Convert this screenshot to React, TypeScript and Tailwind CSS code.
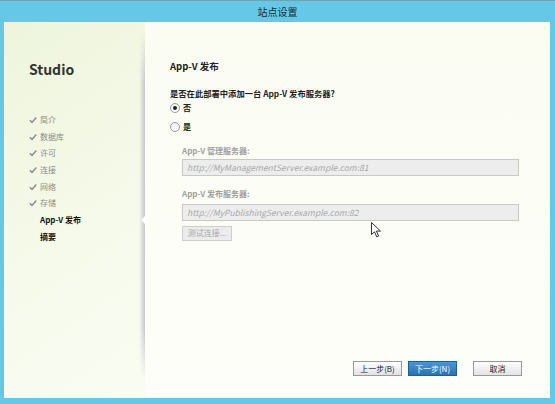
import React from 'react';

const font = { fontFamily: '"Segoe UI", "Noto Sans CJK SC", "Noto Sans", sans-serif' };

const steps = [
  { label: '简介', done: true },
  { label: '数据库', done: true },
  { label: '许可', done: true },
  { label: '连接', done: true },
  { label: '网络', done: true },
  { label: '存储', done: true },
  { label: 'App-V 发布', done: false },
  { label: '摘要', done: false },
];

function Check() {
  return (
    <svg width="8" height="8" viewBox="0 0 8 8" className="shrink-0">
      <path d="M0.8 4.3 L3 6.4 L7.3 1.4" fill="none" stroke="#8a8d8a" strokeWidth="1.5" />
    </svg>
  );
}

function Radio({ checked }: { checked?: boolean }) {
  return (
    <span className="w-[10px] h-[10px] rounded-full border border-[#9a9a9a] bg-gradient-to-b from-[#f0f0f0] to-white flex items-center justify-center">
      {checked && <span className="w-[4px] h-[4px] rounded-full bg-[#222]" />}
    </span>
  );
}

function Cursor() {
  return (
    <svg width="12" height="17" viewBox="0 0 12 17" className="absolute left-[226px] top-[200px]">
      <path d="M0.5 0.5 L0.5 12.5 L3.5 9.8 L5.7 14.8 L7.6 14 L5.4 9.1 L9.5 9.1 Z" fill="white" stroke="#333" strokeWidth="1" />
    </svg>
  );
}

export default function App() {
  return (
    <div className="w-[555px] h-[404px] bg-[#64c8e6] border-t border-[#8a9aa2] flex flex-col overflow-hidden" style={font}>
      <div className="h-[21px] flex items-center justify-center text-[10px] text-[#1c2a30]">站点设置</div>
      <div className="flex-1 flex pl-[4px] pr-[5px] pb-[6px]">
        <div className="flex-1 flex bg-gradient-to-br from-[#eef5dc] via-[#f8fcf0] to-[#fbfdf6]">
          {/* sidebar */}
          <div className="w-[141px] flex">
            <div className="flex-1 pl-[25px] pt-[40px]">
              <div className="text-[14px] font-bold text-[#333] leading-none">Studio</div>
              <div className="mt-[38px] flex flex-col gap-[4.7px]">
                {steps.map((s) => (
                  <div key={s.label} className="h-[12px] flex items-center gap-[3px] text-[8px] leading-none">
                    {s.done ? <Check /> : <span className="w-[8px]" />}
                    <span className={s.done ? 'text-[#8a8d8a]' : 'text-[#111] font-bold'}>{s.label}</span>
                  </div>
                ))}
              </div>
            </div>
            <div className="w-[6px] mt-[10px] mb-[18px] bg-gradient-to-r from-transparent to-[#c4c7cc] [mask-image:linear-gradient(to_bottom,transparent,black_15%,black_85%,transparent)]" />
          </div>
          {/* main */}
          <div className="flex-1 relative flex flex-col bg-gradient-to-b from-[#fbfdf3] to-[#fdfef9] pl-[25px] pr-[28px]">
            <span className="absolute -left-[4px] top-[193px] w-0 h-0 border-y-[5px] border-y-transparent border-r-[5px] border-r-white" />
            <div className="pt-[40px] text-[9.5px] font-bold text-[#222] leading-none">App-V 发布</div>
            <div className="mt-[17px] text-[8.3px] font-bold text-[#222] leading-none">是否在此部署中添加一台 App-V 发布服务器?</div>
            <div className="mt-[5px] flex flex-col gap-[7px]">
              <label className="h-[12px] flex items-center gap-[3px] text-[8px] font-bold text-[#222]"><Radio checked />否</label>
              <label className="h-[12px] flex items-center gap-[3px] text-[8px] font-bold text-[#222]"><Radio />是</label>
            </div>
            <div className="pl-[12px] pr-[3px] mt-[14px] flex flex-col">
              <div className="text-[8px] font-bold text-[#a0a0a0] leading-none">App-V 管理服务器:</div>
              <div className="mt-[4px] h-[17px] border border-[#c8c8c8] bg-[#ededed] px-[4px] flex items-center text-[8.5px] italic text-[#a8a8a8]">http://MyManagementServer.example.com:81</div>
              <div className="mt-[14px] text-[8px] font-bold text-[#a0a0a0] leading-none">App-V 发布服务器:</div>
              <div className="mt-[6px] h-[17px] border border-[#c8c8c8] bg-[#ededed] px-[4px] flex items-center text-[8.5px] italic text-[#a8a8a8]">http://MyPublishingServer.example.com:82</div>
              <div className="mt-[5px] w-[50px] h-[15px] border border-[#cfcfcf] bg-[#ececec] flex items-center justify-center text-[8px] text-[#a8a8a8]">测试连接...</div>
            </div>
            <Cursor />
            <div className="mt-auto mb-[22px] flex justify-end gap-[6px]">
              <button className="w-[49px] h-[15px] border border-[#9a9a9a] bg-gradient-to-b from-white to-[#e2e2e2] text-[8px] text-[#222] flex items-center justify-center">上一步(B)</button>
              <button className="w-[49px] h-[15px] border border-[#1c5f99] bg-gradient-to-b from-[#4a96d4] to-[#2a72b6] text-[8px] text-white flex items-center justify-center">下一步(N)</button>
              <button className="ml-[10px] w-[49px] h-[15px] border border-[#9a9a9a] bg-gradient-to-b from-white to-[#e2e2e2] text-[8px] text-[#222] flex items-center justify-center">取消</button>
            </div>
          </div>
        </div>
      </div>
    </div>
  );
}
